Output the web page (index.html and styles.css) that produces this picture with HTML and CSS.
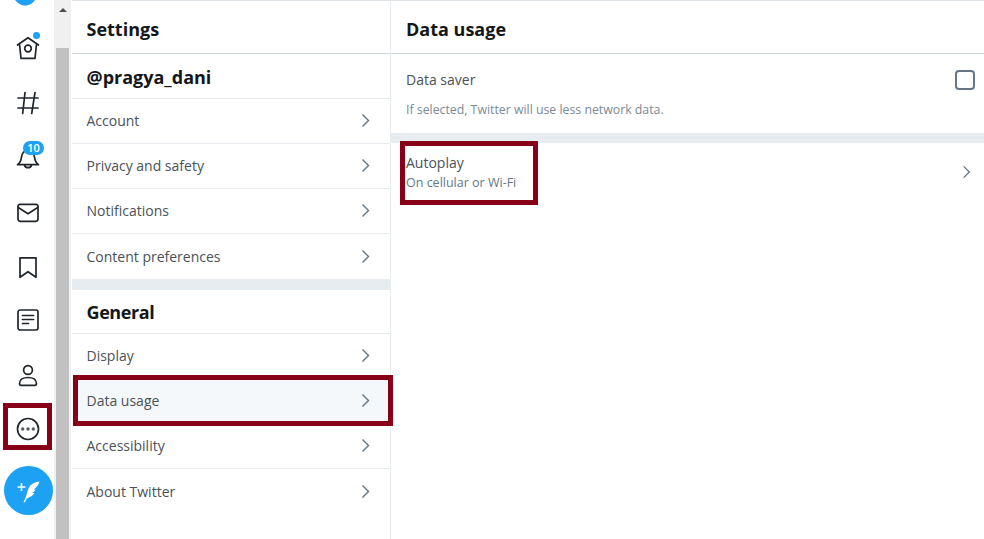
FILE: index.html
```html
<!DOCTYPE html>
<html lang="en">
<head>
<meta charset="utf-8">
<title>Settings</title>
<link rel="stylesheet" href="styles.css">
</head>
<body>
<div class="app">
  <nav class="rail">
    <svg class="logo" width="24" height="6" viewBox="0 0 24 6"><path d="M0 0c3 3.500 6 5.500 10 5.500 4.500 0 8-2.500 10-5.500z" fill="#1da1f2"/></svg>
    <div class="rail-list">
      <a class="rail-item"><span class="dot"></span>
        <svg class="ico" viewBox="0 0 24 24"><path d="M1.500 9 12 1.800 22.500 9M3.500 8 5 22.300h14L20.500 8"/><circle cx="12" cy="12.500" r="3.300"/></svg></a>
      <a class="rail-item"><svg class="ico" viewBox="0 0 24 24"><path d="M9 1.500 6.700 22.500M19 1.500 15.700 22.500M2 7h20M2 17h20"/></svg></a>
      <a class="rail-item"><span class="badge">10</span>
        <svg class="ico" viewBox="0 0 24 24"><path d="M1.500 19.700c2-1.200 3.500-3.500 4-7.500.5-4 2.500-6.700 6.500-6.700s6 2.700 6.500 6.700c.5 4 2 6.300 4 7.500zM8.500 20c.3 1.700 1.700 2.700 3.500 2.700s3.200-1 3.500-2.700"/></svg></a>
      <a class="rail-item"><svg class="ico" viewBox="0 0 24 24"><rect x="2" y="4.300" width="20" height="17" rx="2.200"/><path d="M2.300 7.500 12 13.800l9.700-6.300"/></svg></a>
      <a class="rail-item"><svg class="ico" viewBox="0 0 24 24"><path d="M4 3.800h16v19.400l-8-5.500-8 5.500z"/></svg></a>
      <a class="rail-item"><svg class="ico" viewBox="0 0 24 24"><rect x="2" y="2" width="20" height="20" rx="2.200"/><path d="M6.500 7.500h11M6.500 11.500h11M6.500 15.500h6"/></svg></a>
      <a class="rail-item"><svg class="ico" viewBox="0 0 24 24"><circle cx="12" cy="7" r="4.400"/><path d="M3.500 20.500c0-3.800 3.500-6 8.500-6s8.500 2.200 8.500 6c0 1-.8 1.800-1.500 1.800H5c-.7 0-1.500-.8-1.500-1.800z"/></svg></a>
      <a class="rail-item"><svg class="ico" viewBox="0 0 24 24"><circle cx="12" cy="12" r="10.500"/><circle class="pip" cx="6.700" cy="12" r="1.700"/><circle class="pip" cx="12" cy="12" r="1.700"/><circle class="pip" cx="17.300" cy="12" r="1.700"/></svg></a>
    </div>
    <a class="fab"><svg width="26" height="26" viewBox="0 0 26 26"><path class="plus" d="M5.500 5v8M1.500 9h8"/><path class="quill" d="M23.500 3.500c-5 .5-9 2.500-11 7-1.300 3-2 8-5 14 .8.300 1.400-.2 1.800-1 .8-1.800 1.400-3 2.600-3.600 3-1.200 5-2.500 6.500-5l-2.500.2c1.800-.8 3-2 3.800-3.500l-2-.2c2.500-1.500 4.800-4.500 5.800-7.900z"/></svg></a>
  </nav>
  <div class="scrollbar">
    <div class="arrow"></div>
    <div class="thumb"></div>
  </div>
  <main class="panels">
    <section class="col-left">
      <h1 class="head">Settings</h1>
      <h2 class="subhead">@pragya_dani</h2>
      <a class="row">Account<svg class="chev" viewBox="0 0 12 20"><path d="M2 2l8 8-8 8"/></svg></a>
      <a class="row">Privacy and safety<svg class="chev" viewBox="0 0 12 20"><path d="M2 2l8 8-8 8"/></svg></a>
      <a class="row">Notifications<svg class="chev" viewBox="0 0 12 20"><path d="M2 2l8 8-8 8"/></svg></a>
      <a class="row row-tall">Content preferences<svg class="chev" viewBox="0 0 12 20"><path d="M2 2l8 8-8 8"/></svg></a>
      <div class="band"></div>
      <h2 class="subhead subhead-tight">General</h2>
      <a class="row">Display<svg class="chev" viewBox="0 0 12 20"><path d="M2 2l8 8-8 8"/></svg></a>
      <a class="row row-active">Data usage<svg class="chev" viewBox="0 0 12 20"><path d="M2 2l8 8-8 8"/></svg></a>
      <a class="row">Accessibility<svg class="chev" viewBox="0 0 12 20"><path d="M2 2l8 8-8 8"/></svg></a>
      <a class="row row-tall row-last">About Twitter<svg class="chev" viewBox="0 0 12 20"><path d="M2 2l8 8-8 8"/></svg></a>
    </section>
    <section class="col-right">
      <h1 class="head">Data usage</h1>
      <div class="saver">
        <div class="saver-top"><span>Data saver</span><span class="check"></span></div>
        <p class="hint">If selected, Twitter will use less network data.</p>
      </div>
      <div class="band"></div>
      <a class="auto">
        <span class="auto-text"><span class="auto-title">Autoplay</span><span class="auto-sub">On cellular or Wi-Fi</span></span>
        <svg class="chev chev-small" viewBox="0 0 12 20"><path d="M2 2l8 8-8 8"/></svg>
      </a>
    </section>
  </main>
</div>
<div class="mark mark-more"></div>
<div class="mark mark-data"></div>
<div class="mark mark-auto"></div>
</body>
</html>
```
FILE: styles.css
```css
* { box-sizing: border-box; }
html, body { margin: 0; height: 100%; overflow: hidden; background: #fff; }
body { font-family: "Open Sans", "Noto Sans", sans-serif; color: #14171a; position: relative; }
a { color: inherit; text-decoration: none; }
h1, h2, p { margin: 0; }

.app { display: flex; height: 539px; }

.rail { width: 54px; flex: none; display: flex; flex-direction: column; position: relative; }
.logo { display: block; height: 6px; margin-left: 15px; flex: none; }
.rail-list { display: flex; flex-direction: column; margin-top: 15.300px; margin-left: 4px; }
.rail-item { width: 48px; height: 54.400px; display: flex; align-items: center; justify-content: center; position: relative; }
.ico { width: 24px; height: 24px; fill: none; stroke: #20262b; stroke-width: 1.700; stroke-linejoin: round; stroke-linecap: round; }
.ico .pip { fill: #555b60; stroke: none; }
.dot { position: absolute; width: 7px; height: 7px; border-radius: 50%; background: #1da1f2; left: 29px; top: 10.500px; }
.badge { position: absolute; left: 19px; top: 10.500px; z-index: 1; width: 21px; height: 14px; border-radius: 7px; background: #1da1f2; color: #fff; font-size: 11px; font-weight: 600; line-height: 14px; text-align: center; }
.fab { position: absolute; left: 4px; top: 466px; width: 49px; height: 49px; border-radius: 50%; background: #1da1f2; display: flex; align-items: center; justify-content: center; }
.plus { stroke: #fff; stroke-width: 1.600; fill: none; }
.quill { fill: #fff; }

.scrollbar { width: 17px; flex: none; background: #f0f0f0; display: flex; flex-direction: column; align-items: center; }
.arrow { width: 0; height: 0; margin-top: 8px; border-left: 4px solid transparent; border-right: 4px solid transparent; border-bottom: 4px solid #505050; flex: none; }
.thumb { width: 13px; margin-top: 36px; flex: 1; background: #c1c1c1; }

.panels { flex: 1; display: flex; margin-left: 1px; border-top: 1px solid #e1e6ea; min-width: 0; }
.col-left { width: 319px; flex: none; border-right: 1px solid #e6ecf0; display: flex; flex-direction: column; }
.col-right { flex: 1; display: flex; flex-direction: column; min-width: 0; }

.head { height: 53px; padding: 0 15px; border-bottom: 1px solid #ccd6dd; font-size: 18px; font-weight: 700; line-height: 56px; color: #14171a; flex: none; white-space: nowrap; }
.col-left .head { padding-left: 14.500px; }
.subhead { height: 45px; padding: 0 14.500px; border-bottom: 1px solid #e6ecf0; font-size: 18px; font-weight: 700; line-height: 47px; flex: none; }
.subhead-tight { height: 44px; line-height: 45px; letter-spacing: -0.400px; }
.row { height: 45px; flex: none; display: flex; align-items: center; justify-content: space-between; padding: 0 20px 2px 14.500px; border-bottom: 1px solid #e6ecf0; font-size: 14px; color: #4a5258; }
.row-tall { height: 46px; padding-bottom: 1px; }
.row-last { border-bottom: 0; }
.row-active { background: #f5f8fa; }
.band { height: 10px; background: #e6ecf0; flex: none; }
.chev { width: 9px; height: 15px; fill: none; stroke: #657786; stroke-width: 1.900; flex: none; }
.chev-small { width: 9px; height: 14px; }

.saver { padding: 0 9px 0 15px; height: 79px; flex: none; }
.saver-top { display: flex; align-items: center; justify-content: space-between; height: 51px; font-size: 14px; color: #4a5258; }
.check { width: 20px; height: 20px; border: 2px solid #657786; border-radius: 4px; }
.hint { font-size: 12.300px; line-height: 16px; color: #7b8a97; margin-top: -3px; }
.auto { display: flex; align-items: center; justify-content: space-between; height: 57px; padding: 0 13.500px 0 15px; }
.auto-text { display: flex; flex-direction: column; padding-top: 3px; }
.auto-title { font-size: 14px; line-height: 19px; color: #4a5258; }
.auto-sub { font-size: 12.500px; line-height: 22px; color: #657786; }

.mark { position: absolute; border: 5px solid #870017; pointer-events: none; }
.mark-more { left: 3px; top: 403px; width: 49px; height: 47px; }
.mark-data { left: 73px; top: 375px; width: 320px; height: 51px; }
.mark-auto { left: 400px; top: 141px; width: 138px; height: 64px; }
```
